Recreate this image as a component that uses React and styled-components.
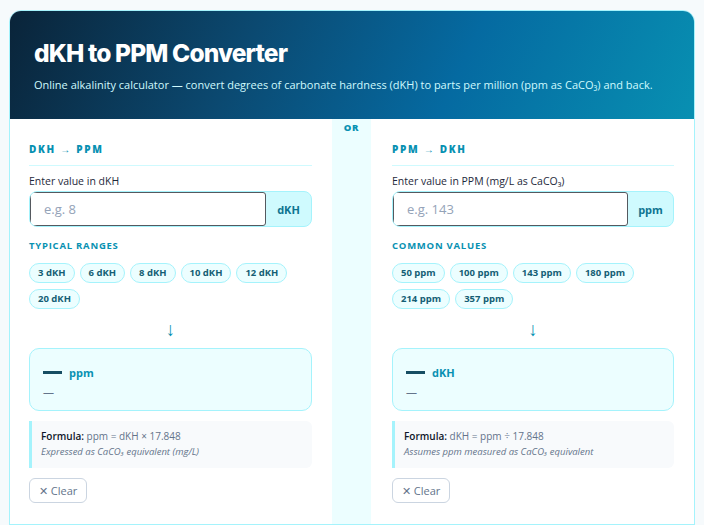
import React from "react";
import styled, { createGlobalStyle } from "styled-components";

const Global = createGlobalStyle`
  * { box-sizing: border-box; }
  html, body { margin: 0; padding: 0; background: #f6fafc; }
  body { font-family: "Open Sans", "Noto Sans", sans-serif; color: #1e293b; }
`;

const Page = styled.div`
  padding: 10px 9px 0 9px;
`;

const Card = styled.div`
  border: 1px solid #a5f3fc;
  border-radius: 12px;
  background: #fff;
  overflow: hidden;
  padding-bottom: 24px;
`;

const Header = styled.header`
  height: 108px;
  padding: 27px 24px 0 24px;
  background: linear-gradient(115deg, #0a2439 0%, #0b4a72 35%, #056aa1 65%, #0890b2 100%);
  color: #fff;
`;

const Title = styled.h1`
  margin: 0;
  font-family: Inter, sans-serif;
  font-weight: 800;
  font-size: 24.5px;
  letter-spacing: -0.035em;
  line-height: 30px;
`;

const Subtitle = styled.p`
  margin: 9px 0 0 0;
  font-size: 11px;
  color: #cffafe;
  line-height: 16px;
  white-space: nowrap;
`;

const Grid = styled.div`
  display: grid;
  grid-template-columns: 322px 39px 1fr;
  border-bottom: 1px solid #a5f3fc;
`;

const Panel = styled.section`
  padding: 22px 20px 21px ${(p) => (p.$first ? "19px" : "21px")};
  display: flex;
  flex-direction: column;
`;

const Divider = styled.div`
  background: #ecfeff;
  display: flex;
  justify-content: center;
  padding-top: 2px;
`;

const OrLabel = styled.span`
  font-size: 9.5px;
  font-weight: 800;
  letter-spacing: 0.08em;
  color: #0891b2;
  line-height: 14px;
`;

const SectionTitle = styled.h2`
  margin: 0;
  font-size: 10px;
  font-weight: 800;
  letter-spacing: 0.17em;
  text-transform: uppercase;
  color: #0891b2;
  line-height: 16px;
  padding-bottom: 8px;
  border-bottom: 1px solid #cffafe;
`;

const Label = styled.label`
  margin-top: 7px;
  font-size: 10.5px;
  line-height: 16px;
  color: #1e293b;
`;

const InputGroup = styled.div`
  margin-top: 2px;
  display: flex;
  height: 36px;
  border: 1px solid #a5f3fc;
  border-radius: 8px;
  background: #cffafe;
  overflow: hidden;
`;

const Input = styled.input`
  flex: 1;
  min-width: 0;
  border: 1px solid #55595f;
  border-radius: 3px;
  background: #fff;
  padding: 0 13px;
  font-family: "Open Sans", sans-serif;
  font-size: 13px;
  color: #1e293b;
  outline: none;
  &::placeholder { color: #94a3b8; }
`;

const Suffix = styled.span`
  width: 45px;
  display: flex;
  align-items: center;
  justify-content: center;
  font-size: 11px;
  font-weight: 700;
  color: #0e7490;
`;

const SubTitle = styled.div`
  margin-top: 12px;
  font-size: 9.5px;
  font-weight: 700;
  letter-spacing: 0.08em;
  text-transform: uppercase;
  color: #0891b2;
  line-height: 14px;
`;

const Chips = styled.div`
  margin-top: 10px;
  display: flex;
  flex-wrap: wrap;
  gap: 6px 5px;
`;

const Chip = styled.button`
  height: 20px;
  padding: 0 8px;
  border: 1px solid #a5f3fc;
  border-radius: 999px;
  background: #ecfeff;
  font-family: "Open Sans", sans-serif;
  font-size: 9.5px;
  font-weight: 700;
  color: #155e75;
  line-height: 18px;
  cursor: pointer;
`;

const Arrow = styled.div`
  margin-top: 9px;
  text-align: center;
  font-size: 19px;
  line-height: 22px;
  color: #0891b2;
`;

const Result = styled.div`
  margin-top: 8px;
  height: 63px;
  border: 1px solid #a5f3fc;
  border-radius: 10px;
  background: #ecfeff;
  padding: 13px 13px;
`;

const ResultMain = styled.div`
  display: flex;
  align-items: center;
  gap: 7px;
  height: 20px;
`;

const Dash = styled.span`
  display: inline-block;
  width: 19px;
  height: 3px;
  background: #164e63;
`;

const Unit = styled.span`
  font-size: 11px;
  font-weight: 700;
  color: #0891b2;
`;

const ResultSub = styled.div`
  margin-top: 2px;
  font-size: 11px;
  color: #64748b;
  line-height: 16px;
`;

const Formula = styled.div`
  margin-top: 10px;
  padding: 8px 9px 9px;
  background: #f8fafc;
  border-left: 3px solid #a5f3fc;
  border-radius: 0 6px 6px 0;
  font-size: 10px;
  line-height: 15px;
  color: #64748b;
  b { color: #0f172a; font-weight: 600; }
`;

const Note = styled.div`
  font-style: italic;
  font-size: 9.5px;
`;

const ClearButton = styled.button`
  align-self: flex-start;
  margin-top: 10px;
  height: 25px;
  padding: 0 9px;
  border: 1px solid #cbd5e1;
  border-radius: 6px;
  background: #fff;
  font-family: "Open Sans", sans-serif;
  font-size: 11px;
  color: #64748b;
  cursor: pointer;
`;

function Converter({ first, title, label, placeholder, unit, chipsLabel, chips, outUnit, formula, note }) {
  return (
    <Panel $first={first}>
      <SectionTitle>{title}</SectionTitle>
      <Label>{label}</Label>
      <InputGroup>
        <Input placeholder={placeholder} />
        <Suffix>{unit}</Suffix>
      </InputGroup>
      <SubTitle>{chipsLabel}</SubTitle>
      <Chips>
        {chips.map((c) => (
          <Chip key={c}>{c}</Chip>
        ))}
      </Chips>
      <Arrow>↓</Arrow>
      <Result>
        <ResultMain>
          <Dash />
          <Unit>{outUnit}</Unit>
        </ResultMain>
        <ResultSub>—</ResultSub>
      </Result>
      <Formula>
        <div><b>Formula:</b> {formula}</div>
        <Note>{note}</Note>
      </Formula>
      <ClearButton>✕ Clear</ClearButton>
    </Panel>
  );
}

export default function App() {
  return (
    <>
      <Global />
      <Page>
        <Card>
          <Header>
            <Title>dKH to PPM Converter</Title>
            <Subtitle>
              Online alkalinity calculator — convert degrees of carbonate hardness (dKH) to parts per million (ppm as CaCO₃) and back.
            </Subtitle>
          </Header>
          <Grid>
            <Converter
              first
              title="dKH → ppm"
              label="Enter value in dKH"
              placeholder="e.g. 8"
              unit="dKH"
              chipsLabel="Typical ranges"
              chips={["3 dKH", "6 dKH", "8 dKH", "10 dKH", "12 dKH", "20 dKH"]}
              outUnit="ppm"
              formula="ppm = dKH × 17.848"
              note="Expressed as CaCO₃ equivalent (mg/L)"
            />
            <Divider>
              <OrLabel>OR</OrLabel>
            </Divider>
            <Converter
              title="ppm → dKH"
              label="Enter value in PPM (mg/L as CaCO₃)"
              placeholder="e.g. 143"
              unit="ppm"
              chipsLabel="Common values"
              chips={["50 ppm", "100 ppm", "143 ppm", "180 ppm", "214 ppm", "357 ppm"]}
              outUnit="dKH"
              formula="dKH = ppm ÷ 17.848"
              note="Assumes ppm measured as CaCO₃ equivalent"
            />
          </Grid>
        </Card>
      </Page>
    </>
  );
}
